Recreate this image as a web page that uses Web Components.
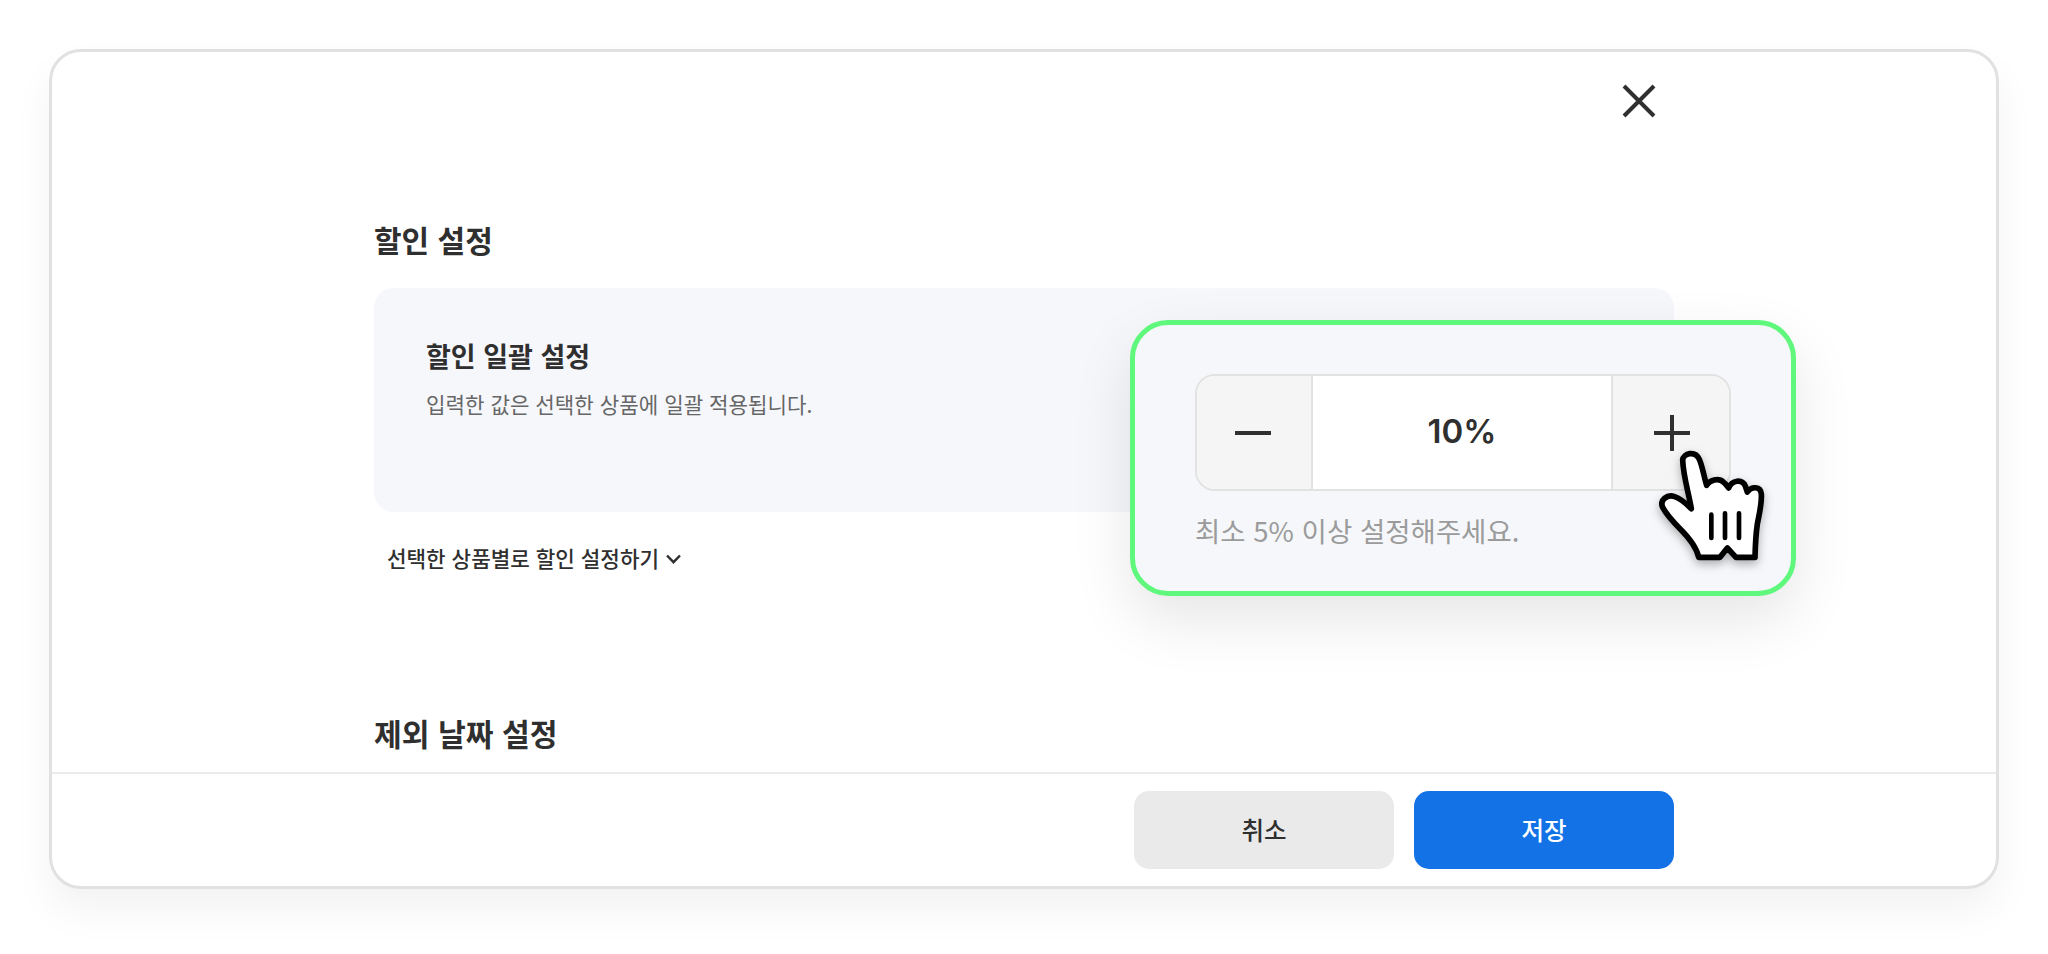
<!DOCTYPE html>
<html lang="ko">
<head>
<meta charset="utf-8">
<title>할인 설정</title>
<style>
html,body{margin:0;height:100%;background:#fff;}
body{font-family:"Noto Sans CJK KR","Noto Sans",sans-serif;color:#2f2f2f;}
</style>
</head>
<body>
<discount-modal>
  <setting-section title="할인 설정">
    <bulk-panel title="할인 일괄 설정" desc="입력한 값은 선택한 상품에 일괄 적용됩니다.">
      <callout-card>
        <value-stepper value="10%"></value-stepper>
        <span slot="hint">최소 5% 이상 설정해주세요.</span>
      </callout-card>
    </bulk-panel>
    <expand-link>선택한 상품별로 할인 설정하기</expand-link>
  </setting-section>
  <setting-section class="second" title="제외 날짜 설정"></setting-section>
  <action-button slot="footer">취소</action-button>
  <action-button slot="footer" primary>저장</action-button>
</discount-modal>

<script>
const modal_template = document.createElement('template');
modal_template.innerHTML = `
<style>
:host{display:block;box-sizing:border-box;height:954px;padding:49px 49px 65px;}
#box{
  box-sizing:border-box;height:840px;background:#fff;
  border:3px solid #e1e1e1;border-radius:32px;
  box-shadow:0 22px 40px rgba(0,0,0,.05);
  display:flex;flex-direction:column;overflow:hidden;
}
#body{flex:1;min-height:0;overflow:hidden;padding:0 322px;}
#head{height:167px;display:flex;justify-content:flex-end;align-items:flex-start;padding-top:29px;box-sizing:border-box;}
#close{display:block;width:40px;height:40px;margin-right:15px;}
#foot{
  height:114px;box-sizing:border-box;border-top:2px solid #ebebeb;
  padding:17px 322px 0;display:flex;justify-content:flex-end;gap:20px;
}
</style>
<div id="box">
  <div id="body">
    <div id="head">
      <svg id="close" viewBox="0 0 40 40" fill="none" stroke="#303030" stroke-width="4"><path d="M5 5L35 35M35 5L5 35"/></svg>
    </div>
    <slot></slot>
  </div>
  <div id="foot"><slot name="footer"></slot></div>
</div>`;

class discountModal extends HTMLElement{
  constructor(){
    super();
    this.attachShadow({mode:"open"});
    this.shadowRoot.appendChild(modal_template.content.cloneNode(true));
  }
}

const section_template = document.createElement('template');
section_template.innerHTML = `
<style>
:host{display:block;}
:host(.second){margin-top:140px;}
h2{margin:0 0 29px;font-size:30px;line-height:40px;font-weight:700;color:#2f2f2f;}
:host(.second) h2{font-size:30.2px;}
</style>
<h2 id="title"></h2>
<slot></slot>`;

class settingSection extends HTMLElement{
  constructor(){
    super();
    this.attachShadow({mode:"open"});
    this.shadowRoot.appendChild(section_template.content.cloneNode(true));
    this.shadowRoot.getElementById("title").innerText = this.getAttribute("title");
  }
}

const panel_template = document.createElement('template');
panel_template.innerHTML = `
<style>
:host{display:block;position:relative;box-sizing:border-box;height:224px;background:#f6f7fb;border-radius:20px;padding:50px 52px 0;}
h3{margin:0;font-size:27px;line-height:36px;font-weight:700;color:#2f2f2f;}
p{margin:15px 0 0;font-size:21.2px;line-height:30px;color:#666;}
</style>
<h3 id="title"></h3>
<p id="desc"></p>
<slot></slot>`;

class bulkPanel extends HTMLElement{
  constructor(){
    super();
    this.attachShadow({mode:"open"});
    this.shadowRoot.appendChild(panel_template.content.cloneNode(true));
    this.shadowRoot.getElementById("title").innerText = this.getAttribute("title");
    this.shadowRoot.getElementById("desc").innerText = this.getAttribute("desc");
  }
}

const card_template = document.createElement('template');
card_template.innerHTML = `
<style>
:host{
  display:block;position:absolute;left:756px;top:32px;width:666px;height:276px;box-sizing:border-box;
  background:#f5f7fa;border:5px solid #5ff77c;border-radius:38px;
  box-shadow:0 24px 60px rgba(0,0,0,.1);
  padding:49px 60px 0;
}
#hint{margin-top:21px;font-size:27.5px;line-height:36px;color:#9b9b9b;}
#cursor{position:absolute;left:505px;top:75px;width:160px;height:180px;overflow:visible;filter:drop-shadow(0 4px 5px rgba(0,0,0,.3));}
</style>
<slot></slot>
<div id="hint"><slot name="hint"></slot></div>
<svg id="cursor" viewBox="0 0 480 540">
  <path fill="#fff" stroke="#000" stroke-width="17" stroke-linejoin="round" d="M128 180C130 160 165 150 178 178C188 200 192 232 200 256C208 240 236 232 250 246C258 252 262 258 266 264C276 240 306 236 316 258C318 264 320 270 322 276C334 258 362 258 364 282C366 310 358 340 352 372C348 400 346 430 345 472L288 472L262 444L240 472L176 472C170 440 146 412 120 386C100 366 80 344 68 322C58 300 82 282 104 290C122 296 140 312 154 326C146 278 130 230 128 180Z"/>
  <path fill="none" stroke="#000" stroke-width="14" stroke-linecap="round" d="M214 344V414M255 340V414M297 340V414"/>
</svg>`;

class calloutCard extends HTMLElement{
  constructor(){
    super();
    this.attachShadow({mode:"open"});
    this.shadowRoot.appendChild(card_template.content.cloneNode(true));
  }
}

const stepper_template = document.createElement('template');
stepper_template.innerHTML = `
<style>
:host{display:grid;grid-template-columns:116px 1fr 118px;box-sizing:border-box;width:536px;height:117px;border:2.5px solid #e2e2e2;border-radius:20px;overflow:hidden;background:#fff;}
.step{background:#f5f5f5;display:flex;align-items:center;justify-content:center;}
.step svg{display:block;width:36px;height:36px;}
#minus{border-right:2.5px solid #e2e2e2;padding-right:2px;}
#plus{border-left:2.5px solid #e2e2e2;padding-left:2px;}
#value{display:flex;align-items:center;justify-content:center;padding-bottom:3px;font-family:Inter,"Noto Sans",sans-serif;font-size:33px;font-weight:600;color:#2f2f2f;}
</style>
<div class="step" id="minus"><svg viewBox="0 0 36 36" stroke="#303030" stroke-width="4"><path d="M0 18H36"/></svg></div>
<div id="value"></div>
<div class="step" id="plus"><svg viewBox="0 0 36 36" stroke="#303030" stroke-width="4"><path d="M0 18H36M18 0V36"/></svg></div>`;

class valueStepper extends HTMLElement{
  constructor(){
    super();
    this.attachShadow({mode:"open"});
    this.shadowRoot.appendChild(stepper_template.content.cloneNode(true));
    this.shadowRoot.getElementById("value").innerText = this.getAttribute("value");
  }
}

const link_template = document.createElement('template');
link_template.innerHTML = `
<style>
:host{display:flex;align-items:center;gap:7px;margin-top:31px;padding-left:13px;font-size:21.25px;line-height:30px;font-weight:500;color:#2f2f2f;}
svg{display:block;width:15px;height:10px;margin-top:2px;}
</style>
<slot></slot>
<svg viewBox="0 0 15 10" fill="none" stroke="#2f2f2f" stroke-width="2.4"><path d="M1 1.5L7.5 8.2L14 1.5"/></svg>`;

class expandLink extends HTMLElement{
  constructor(){
    super();
    this.attachShadow({mode:"open"});
    this.shadowRoot.appendChild(link_template.content.cloneNode(true));
  }
}

const button_template = document.createElement('template');
button_template.innerHTML = `
<style>
:host{
  display:flex;align-items:center;justify-content:center;box-sizing:border-box;
  width:260px;height:78px;border-radius:15px;background:#eaeaea;color:#2f2f2f;
  font-size:24.5px;font-weight:500;padding-bottom:2px;
}
:host([primary]){background:#1272e6;color:#fff;}
</style>
<slot></slot>`;

class actionButton extends HTMLElement{
  constructor(){
    super();
    this.attachShadow({mode:"open"});
    this.shadowRoot.appendChild(button_template.content.cloneNode(true));
  }
}

customElements.define("discount-modal", discountModal);
customElements.define("setting-section", settingSection);
customElements.define("bulk-panel", bulkPanel);
customElements.define("callout-card", calloutCard);
customElements.define("value-stepper", valueStepper);
customElements.define("expand-link", expandLink);
customElements.define("action-button", actionButton);
</script>
</body>
</html>
